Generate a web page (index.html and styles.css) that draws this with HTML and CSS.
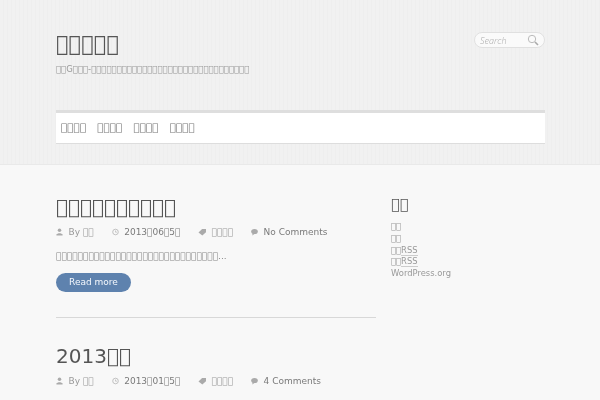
FILE: index.html
```html
<!DOCTYPE html>
<html lang="zh">
<head>
<meta charset="utf-8">
<title>&#xE000;&#xE000;&#xE000;&#xE000;&#xE000;</title>
<link rel="stylesheet" href="styles.css">
</head>
<body>
<header class="site-header">
  <div class="wrap">
    <div class="brand-row">
      <div class="brand">
        <h1 class="site-title">&#xE000;&#xE000;&#xE000;&#xE000;&#xE000;</h1>
        <p class="tagline">&#xE000;&#xE000;G&#xE000;&#xE000;&#xE000;-&#xE000;&#xE000;&#xE000;&#xE000;&#xE000;&#xE000;&#xE000;&#xE000;&#xE000;&#xE000;&#xE000;&#xE000;&#xE000;&#xE000;&#xE000;&#xE000;&#xE000;&#xE000;&#xE000;&#xE000;&#xE000;&#xE000;&#xE000;&#xE000;&#xE000;&#xE000;&#xE000;&#xE000;&#xE000;&#xE000;&#xE000;</p>
      </div>
      <div class="search">
        <span class="search-text">Search</span>
        <svg class="search-icon" viewBox="0 0 12 12" width="12" height="12"><circle cx="5" cy="5" r="3.7" fill="none" stroke="#bbb" stroke-width="1"/><path d="M8 8l3 3" stroke="#aaa" stroke-width="1.6" fill="none"/></svg>
      </div>
    </div>
    <nav class="nav">
      <a>&#xE000;&#xE000;&#xE000;&#xE000;</a>
      <a>&#xE000;&#xE000;&#xE000;&#xE000;</a>
      <a>&#xE000;&#xE000;&#xE000;&#xE000;</a>
      <a>&#xE000;&#xE000;&#xE000;&#xE000;</a>
    </nav>
  </div>
</header>
<div class="wrap content">
  <main class="posts">
    <article class="post first">
      <h2 class="post-title">&#xE000;&#xE000;&#xE000;&#xE000;&#xE000;&#xE000;&#xE000;&#xE000;&#xE000;&#xE000;</h2>
      <div class="meta">
        <span class="m"><svg class="ic" viewBox="0 0 8 9"><circle cx="4" cy="2.6" r="2"/><path d="M0.5 8.5V7.2L3 6h2l2.5 1.2v1.3z"/></svg>By <a class="soft">&#xE000;&#xE000;</a></span>
        <span class="m"><svg class="ic" viewBox="0 0 8 9"><circle cx="4" cy="4.5" r="3.2" fill="none" stroke="#aaa" stroke-width=".8"/><path d="M4 2.8v1.9h1.6" fill="none" stroke="#aaa" stroke-width=".7"/></svg><b>2013&#xE000;06&#xE000;5&#xE000;</b></span>
        <span class="m"><svg class="ic ic-tag" viewBox="0 0 9 9"><path d="M0.3 5L4.3 1.2H8.7V4.8L4.6 8.4z"/></svg><a class="soft">&#xE000;&#xE000;&#xE000;&#xE000;</a></span>
        <span class="m"><svg class="ic" viewBox="0 0 8 9"><ellipse cx="4" cy="4" rx="3.8" ry="2.9"/><path d="M2 6L1.4 8.4 4.4 6.4z"/></svg><b>No Comments</b></span>
      </div>
      <p class="excerpt">&#xE000;&#xE000;&#xE000;&#xE000;&#xE000;&#xE000;&#xE000;&#xE000;&#xE000;&#xE000;&#xE000;&#xE000;&#xE000;&#xE000;&#xE000;&#xE000;&#xE000;&#xE000;&#xE000;&#xE000;&#xE000;&#xE000;&#xE000;&#xE000;&#xE000;&#xE000;&#xE000;&#xE000;&#xE000;&#xE000;...</p>
      <a class="more">Read more</a>
    </article>
    <article class="post">
      <h2 class="post-title">2013&#xE000;&#xE000;</h2>
      <div class="meta">
        <span class="m"><svg class="ic" viewBox="0 0 8 9"><circle cx="4" cy="2.6" r="2"/><path d="M0.5 8.5V7.2L3 6h2l2.5 1.2v1.3z"/></svg>By <a class="soft">&#xE000;&#xE000;</a></span>
        <span class="m"><svg class="ic" viewBox="0 0 8 9"><circle cx="4" cy="4.5" r="3.2" fill="none" stroke="#aaa" stroke-width=".8"/><path d="M4 2.8v1.9h1.6" fill="none" stroke="#aaa" stroke-width=".7"/></svg><b>2013&#xE000;01&#xE000;5&#xE000;</b></span>
        <span class="m"><svg class="ic ic-tag" viewBox="0 0 9 9"><path d="M0.3 5L4.3 1.2H8.7V4.8L4.6 8.4z"/></svg><a class="soft">&#xE000;&#xE000;&#xE000;&#xE000;</a></span>
        <span class="m"><svg class="ic" viewBox="0 0 8 9"><ellipse cx="4" cy="4" rx="3.8" ry="2.9"/><path d="M2 6L1.4 8.4 4.4 6.4z"/></svg><b>4 Comments</b></span>
      </div>
    </article>
  </main>
  <aside class="sidebar">
    <h3 class="widget-title">&#xE000;&#xE000;</h3>
    <ul class="links">
      <li>&#xE000;&#xE000;</li>
      <li>&#xE000;&#xE000;</li>
      <li>&#xE000;&#xE000;<span class="ul">RSS</span></li>
      <li>&#xE000;&#xE000;<span class="ul">RSS</span></li>
      <li>WordPress.org</li>
    </ul>
  </aside>
</div>
</body>
</html>
```

FILE: styles.css
```css
* { box-sizing: border-box; }
html, body { margin: 0; padding: 0; height: 400px; overflow: hidden; }
body {
  background: #f8f8f8;
  font-family: "DejaVu Sans", sans-serif;
  color: #888;
}
.wrap { width: 489px; margin-left: 56px; will-change: opacity; }
.site-header {
  height: 165px;
  border-bottom: 1px solid #e9e9e9;
  background: repeating-linear-gradient(90deg, #f1f1f1 0, #f1f1f1 3px, #eeeeee 3px, #eeeeee 4px);
  padding-top: 32px;
}
.brand-row { display: flex; justify-content: space-between; align-items: flex-start; height: 78px; }
.site-title { margin: 0; font-size: 21px; line-height: 25px; font-weight: normal; color: #555; }
.tagline { margin: 6px 0 0; font-size: 8.5px; line-height: 12px; color: #999; }
.search {
  width: 71px; height: 16px;
  border: 1px solid #e0e0e0; border-radius: 8px; background: #fafafa;
  display: flex; align-items: center; justify-content: space-between; padding: 0 5px 0 5px;
}
.search-text { font-family: "Open Sans", sans-serif; font-style: italic; font-size: 9px; font-weight: 300; color: #aaa; }
.search-icon { display: block; }
.nav {
  height: 34px;
  border-top: 3px solid #dedede;
  border-bottom: 1px solid #ddd;
  background: #fff;
  display: flex; gap: 11px; align-items: center; padding: 0 0 3px 5px;
  font-size: 10.5px; color: #777;
}
.content { display: flex; gap: 15px; }
.posts { width: 320px; flex: none; }
.post { padding-top: 26px; }
.post.first { padding-top: 30px; padding-bottom: 25px; border-bottom: 1px solid #d8d8d8; }
.post-title { margin: 0; font-size: 20px; line-height: 24px; font-weight: normal; color: #555; }
.meta { display: flex; margin-top: 6px; font-size: 9px; line-height: 14px; color: #999; }
.m { display: flex; align-items: center; white-space: pre; margin-right: 18px; }
.m b { font-weight: normal; color: #7a7a7a; }
.ic { width: 7px; height: 8px; margin-right: 5.5px; fill: #aaa; display: block; }
.ic-tag { width: 8.5px; margin-right: 4.5px; }
.excerpt { margin: 10px 0 0; font-size: 9px; line-height: 14px; color: #888; }
.more {
  display: block; width: 75px; height: 19px; margin-top: 10px;
  background: #5e82ae; border-radius: 10px; color: #f4f8fd;
  text-align: center; font-size: 9px; line-height: 19px;
}
.sidebar { flex: none; padding-top: 29px; }
.widget-title { margin: 0; font-size: 14.5px; line-height: 20px; font-weight: normal; color: #555; }
.links { list-style: none; margin: 7px 0 0; padding: 0; font-size: 8.4px; line-height: 11.8px; color: #999; }
.ul { border-bottom: 1px solid #ccc; }
```
